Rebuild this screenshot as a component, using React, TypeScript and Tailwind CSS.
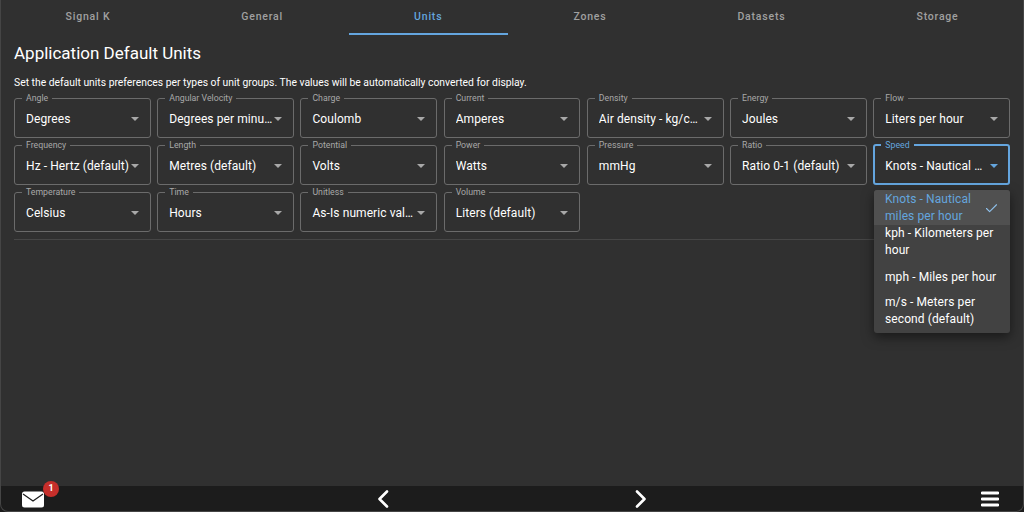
import { Check } from 'lucide-react';

const tabs = ['Signal K', 'General', 'Units', 'Zones', 'Datasets', 'Storage'];

const fields = [
  { label: 'Angle', value: 'Degrees' },
  { label: 'Angular Velocity', value: 'Degrees per minute' },
  { label: 'Charge', value: 'Coulomb' },
  { label: 'Current', value: 'Amperes' },
  { label: 'Density', value: 'Air density - kg/cubic meter' },
  { label: 'Energy', value: 'Joules' },
  { label: 'Flow', value: 'Liters per hour' },
  { label: 'Frequency', value: 'Hz - Hertz (default)' },
  { label: 'Length', value: 'Metres (default)' },
  { label: 'Potential', value: 'Volts' },
  { label: 'Power', value: 'Watts' },
  { label: 'Pressure', value: 'mmHg' },
  { label: 'Ratio', value: 'Ratio 0-1 (default)' },
  { label: 'Speed', value: 'Knots - Nautical miles per hour', focused: true },
  { label: 'Temperature', value: 'Celsius' },
  { label: 'Time', value: 'Hours' },
  { label: 'Unitless', value: 'As-Is numeric value' },
  { label: 'Volume', value: 'Liters (default)' },
];

function SelectField({ label, value, focused }: { label: string; value: string; focused?: boolean }) {
  return (
    <fieldset
      className={`h-[43px] min-w-0 rounded-[3px] ${
        focused ? 'border-2 border-[#64a5de] pl-[10px] pr-[10px]' : 'border border-[#6b6b6b] pl-[11px] pr-[11px]'
      }`}
    >
      <legend className={`ml-[-4px] px-[4px] text-[8.75px] leading-[6px] ${focused ? 'text-[#64a5de]' : 'text-[#a8a8a8]'}`}>
        {label}
      </legend>
      <div className="flex h-[35px] items-center gap-[1.5px]">
        <span className="min-w-0 flex-1 truncate text-[12px] tracking-[0.08px] text-white">{value}</span>
        <svg width="8" height="4" viewBox="0 0 8 4" className="shrink-0">
          <path d="M0 0h8L4 4z" fill={focused ? '#64a5de' : '#a8a8a8'} />
        </svg>
      </div>
    </fieldset>
  );
}

function SpeedMenu() {
  return (
    <div className="absolute left-[874px] top-[190px] w-[136px] overflow-hidden rounded-[3px] bg-[#424242] text-[12px] leading-[17px] tracking-[0.1px] text-white shadow-[0_4px_12px_rgba(0,0,0,0.5)]">
      <div className="flex items-center bg-[#505050] pl-[11px] pr-[11px] pt-[1px] text-[#64a5de]">
        <span className="flex-1">Knots - Nautical miles per hour</span>
        <Check className="h-[15px] w-[15px] shrink-0 text-[#8fc0ea]" strokeWidth={1.75} />
      </div>
      <div className="pl-[11px] pr-[8px]">kph - Kilometers per hour</div>
      <div className="pl-[11px] pr-[8px] pt-[10px]">mph - Miles per hour</div>
      <div className="pb-[5px] pl-[11px] pr-[8px] pt-[8px]">m/s - Meters per second (default)</div>
    </div>
  );
}

export default function App() {
  return (
    <div className="relative flex h-[512px] w-[1024px] flex-col overflow-hidden bg-[#303030] font-['Roboto',sans-serif]">
      <div className="flex h-[35px] shrink-0">
        {tabs.map((t) => (
          <div
            key={t}
            className={`flex h-[35px] flex-auto items-center justify-center border-b-2 pt-[1px] text-[10.5px] font-medium tracking-[0.8px] ${
              t === 'Units' ? 'border-[#64a5de] text-[#64a5de]' : 'border-transparent text-[#a0a0a0]'
            }`}
          >
            {t}
          </div>
        ))}
      </div>

      <div className="flex-1 px-[14px]">
        <h1 className="mt-[8px] text-[17px] leading-[20px] text-white">Application Default Units</h1>
        <p className="mt-[14px] text-[10.35px] leading-[12px] text-white">
          Set the default units preferences per types of unit groups. The values will be automatically converted for display.
        </p>
        <div className="mt-[6px] grid grid-cols-7 gap-x-[6.5px] gap-y-[4px]">
          {fields.map((f) => (
            <SelectField key={f.label} label={f.label} value={f.value} focused={f.focused} />
          ))}
        </div>
        <div className="mt-[7px] h-px bg-[#464646]" />
      </div>

      <div className="flex h-[26px] shrink-0 items-center bg-[#1c1c1c] pl-[22px] pr-[25px]">
        <div className="relative">
          <svg width="22" height="17" viewBox="0 0 22 17" className="block">
            <rect width="22" height="16" y="0.5" rx="2.5" fill="#fff" />
            <path d="M1 3l10 7 10-7" fill="none" stroke="#1c1c1c" strokeWidth="1.2" />
          </svg>
          <span className="absolute left-[21px] top-[-10px] flex h-4 w-4 items-center justify-center rounded-full bg-[#c62f2b] text-[9px] font-bold text-white">
            1
          </span>
        </div>
        <svg width="12" height="18" viewBox="0 0 12 18" className="ml-[333px]">
          <path d="M10 1.5L2.5 9l7.5 7.5" fill="none" stroke="#fff" strokeWidth="2.6" strokeLinecap="round" strokeLinejoin="round" />
        </svg>
        <svg width="12" height="18" viewBox="0 0 12 18" className="ml-[246px]">
          <path d="M2 1.5L9.5 9 2 16.5" fill="none" stroke="#fff" strokeWidth="2.6" strokeLinecap="round" strokeLinejoin="round" />
        </svg>
        <svg width="18" height="16" viewBox="0 0 18 16" className="ml-auto">
          <path d="M1 2h16M1 8h16M1 14h16" fill="none" stroke="#fff" strokeWidth="2.8" strokeLinecap="round" />
        </svg>
      </div>

      <SpeedMenu />
      {/* window frame edge */}
      <div className="pointer-events-none absolute inset-0 rounded-b-lg border border-t-0 border-[#454545]" />
    </div>
  );
}
